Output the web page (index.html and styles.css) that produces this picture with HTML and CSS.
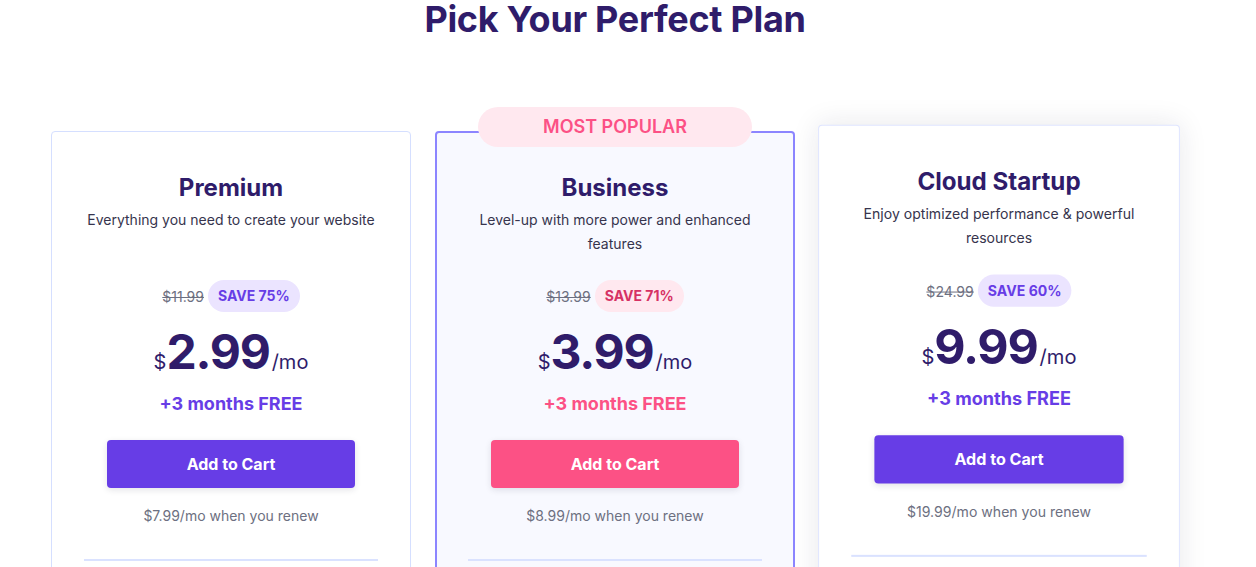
FILE: index.html
```html
<!DOCTYPE html>
<html lang="en">
<head>
    <meta charset="UTF-8">
    <meta name="viewport" content="width=device-width, initial-scale=1.0">
    <title>Pick Your Perfect Plan</title>
    <link rel="stylesheet" href="styles.css">
</head>
<body>
<div class="page">
    <h1 class="page-title">Pick Your Perfect Plan</h1>

    <div class="plans">
        <div class="plan">
            <h3 class="plan-name">Premium</h3>
            <p class="plan-desc">Everything you need to create your website</p>
            <div class="discount">
                <span class="old-price">$11.99</span>
                <span class="save">SAVE 75%</span>
            </div>
            <div class="price"><span class="currency">$</span><span class="amount">2.99</span><span class="period">/mo</span></div>
            <p class="bonus">+3 months FREE</p>
            <button class="cart-btn" type="button">Add to Cart</button>
            <p class="renew">$7.99/mo when you renew</p>
            <hr class="divider">
        </div>

        <div class="plan plan-popular">
            <span class="popular-badge">MOST POPULAR</span>
            <h3 class="plan-name">Business</h3>
            <p class="plan-desc">Level-up with more power and enhanced features</p>
            <div class="discount">
                <span class="old-price">$13.99</span>
                <span class="save">SAVE 71%</span>
            </div>
            <div class="price"><span class="currency">$</span><span class="amount">3.99</span><span class="period">/mo</span></div>
            <p class="bonus">+3 months FREE</p>
            <button class="cart-btn" type="button">Add to Cart</button>
            <p class="renew">$8.99/mo when you renew</p>
            <hr class="divider">
        </div>

        <div class="plan plan-raised">
            <h3 class="plan-name">Cloud Startup</h3>
            <p class="plan-desc">Enjoy optimized performance &amp; powerful resources</p>
            <div class="discount">
                <span class="old-price">$24.99</span>
                <span class="save">SAVE 60%</span>
            </div>
            <div class="price"><span class="currency">$</span><span class="amount">9.99</span><span class="period">/mo</span></div>
            <p class="bonus">+3 months FREE</p>
            <button class="cart-btn" type="button">Add to Cart</button>
            <p class="renew">$19.99/mo when you renew</p>
            <hr class="divider">
        </div>
    </div>
</div>
</body>
</html>
```

FILE: styles.css
```css
body {
    font-family: Inter, "Noto Sans", sans-serif;
    margin: 0;
    padding: 0;
    background-color: #fff;
    color: #2f1c6a;
}

.page {
    width: 1230px;
}

.page-title {
    margin: 0;
    padding-top: 1px;
    font-size: 36px;
    line-height: 36px;
    font-weight: 700;
    letter-spacing: -0.3px;
    text-align: center;
    color: #2f1c6a;
}

.plans {
    width: 1128px;
    margin: 94px auto 0;
    display: flex;
    gap: 24px;
    align-items: flex-start;
}

.plan {
    position: relative;
    width: 360px;
    box-sizing: border-box;
    padding: 40px 32px 80px;
    border: 1px solid #d5dfff;
    border-radius: 4px;
    background-color: #fff;
    text-align: center;
}

.plan-popular {
    border: 2px solid #8c85ff;
    padding: 39px 31px 79px;
    background-color: #f8f9ff;
}

.plan-raised {
    transform: translateY(-5px) scale(1.005);
    box-shadow: 0 0 28px rgba(29, 30, 60, 0.1);
    border-color: #dfe5ff;
}

.popular-badge {
    position: absolute;
    top: -26px;
    left: 50%;
    transform: translateX(-50%);
    width: 274px;
    height: 40px;
    line-height: 40px;
    border-radius: 20px;
    background-color: #ffe8ef;
    color: #fc5185;
    font-size: 18px;
    font-weight: 600;
}

.plan-name {
    margin: 0;
    font-size: 24px;
    line-height: 32px;
    font-weight: 700;
}

.plan-desc {
    margin: 4px 0 0;
    min-height: 48px;
    font-size: 14px;
    line-height: 24px;
    color: #36344d;
}

.discount {
    margin-top: 24px;
    display: flex;
    justify-content: center;
    align-items: center;
    gap: 4px;
}

.old-price {
    font-size: 14px;
    color: #6d7081;
    text-decoration: line-through;
}

.save {
    height: 32px;
    line-height: 32px;
    padding: 0 10px;
    border-radius: 16px;
    background-color: #ebe4ff;
    color: #673de6;
    font-size: 14px;
    font-weight: 700;
}

.plan-popular .save {
    background-color: #ffe8ef;
    color: #d63163;
}

.price {
    margin-top: 12px;
    height: 56px;
    line-height: 56px;
    color: #2f1c6a;
}

.currency,
.period {
    font-size: 20px;
}

.amount {
    font-size: 48px;
    font-weight: 700;
    letter-spacing: -1.2px;
    margin-right: 2px;
}

.bonus {
    margin: 12px 0 0;
    font-size: 18px;
    line-height: 24px;
    font-weight: 700;
    color: #673de6;
}

.plan-popular .bonus {
    color: #fc5185;
}

.cart-btn {
    display: block;
    width: 248px;
    height: 48px;
    margin: 24px auto 0;
    border: none;
    border-radius: 4px;
    background-color: #673de6;
    color: #fff;
    font-family: inherit;
    font-size: 16px;
    font-weight: 700;
    cursor: pointer;
    box-shadow: 0 2px 6px rgba(29, 30, 60, 0.12);
}

.plan-popular .cart-btn {
    background-color: #fc5185;
}

.renew {
    margin: 16px 0 0;
    font-size: 14px;
    line-height: 24px;
    color: #6d7081;
}

.divider {
    margin: 31px 0 0;
    border: none;
    height: 2px;
    background-color: #dae2ff;
}
```
